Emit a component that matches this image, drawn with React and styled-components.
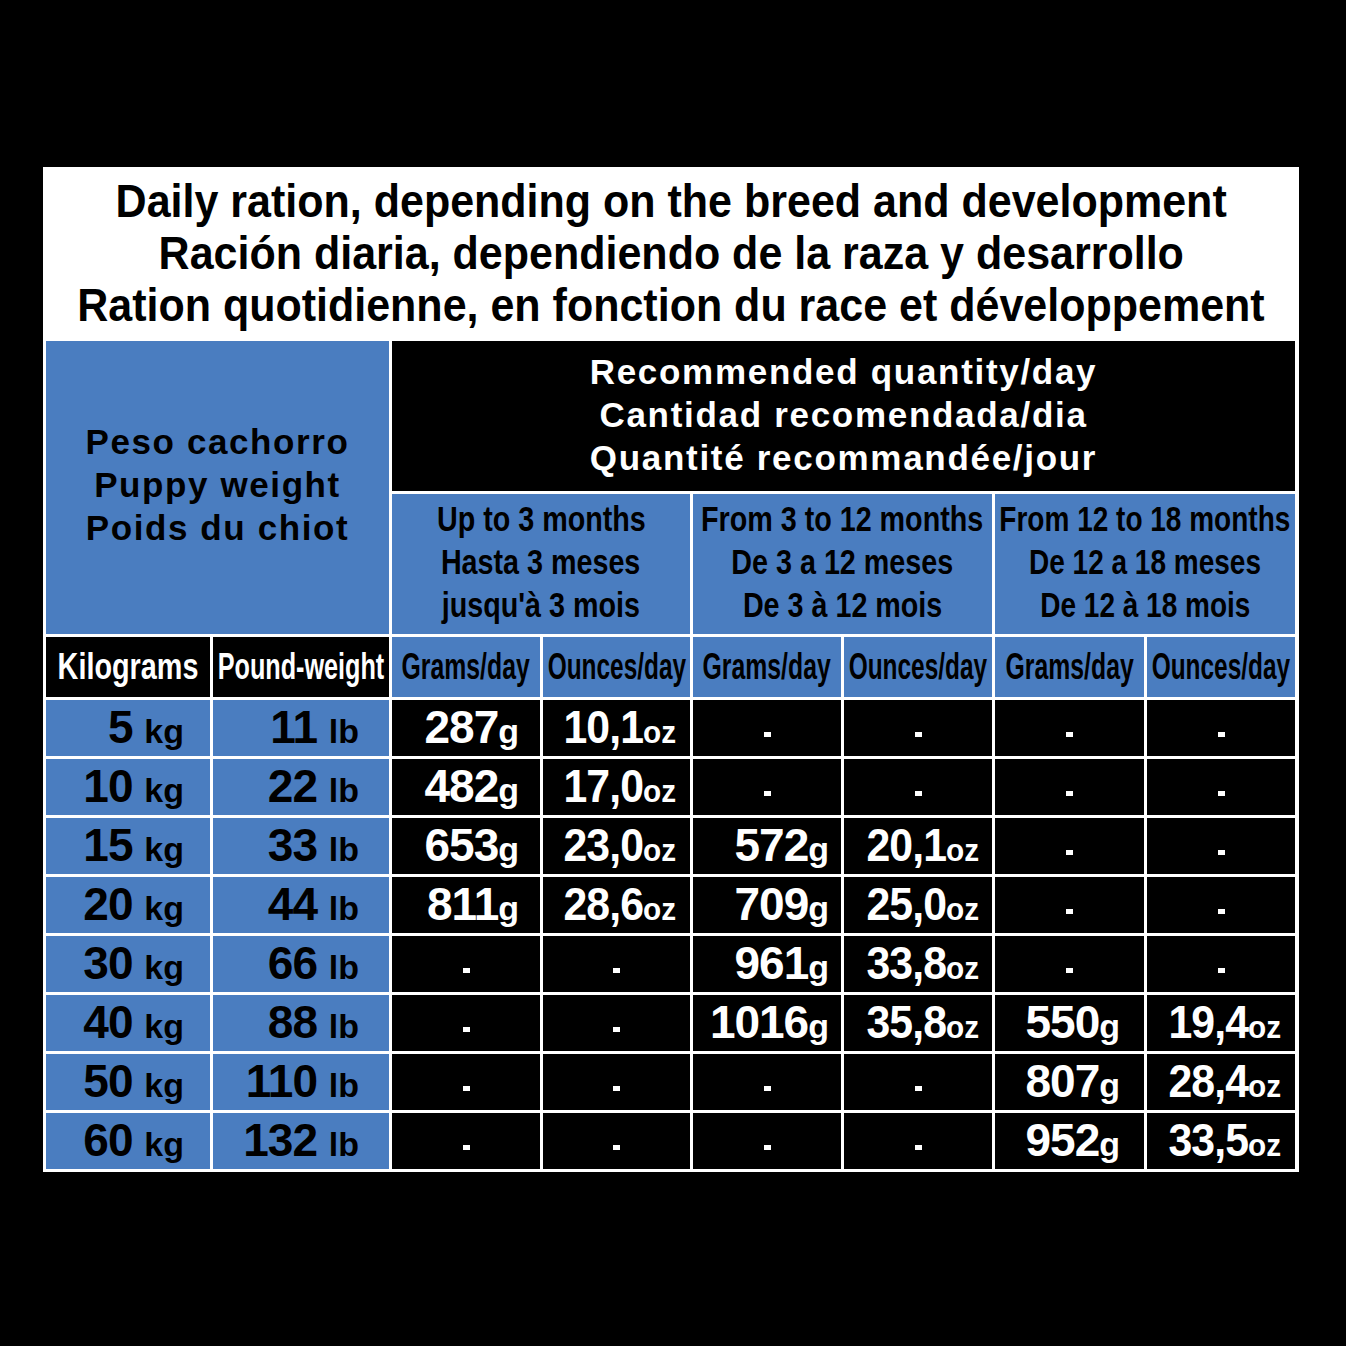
import React from 'react';
import styled, { createGlobalStyle } from 'styled-components';

const GlobalStyle = createGlobalStyle`
  html, body {
    margin: 0;
    padding: 0;
    background: #000;
  }
  body {
    font-family: "Liberation Sans", Arial, sans-serif;
  }
`;

const BLUE = '#4a7dc0';

const Page = styled.div`
  width: 1346px;
  height: 1346px;
  box-sizing: border-box;
  padding: 167px 0 0 43px;
  background: #000;
`;

const Sheet = styled.div`
  width: 1256px;
  box-sizing: border-box;
  background: #fff;
  padding: 0 3px 3px 3px;
`;

const Title = styled.div`
  height: 174px;
  display: flex;
  flex-direction: column;
  justify-content: center;
  align-items: center;
  font-size: 47px;
  font-weight: 700;
  line-height: 52px;
  color: #000;
  padding-bottom: 2px;
  box-sizing: border-box;
`;

const Squeeze = styled.span`
  display: inline-block;
  white-space: nowrap;
  transform: scaleX(${p => p.$s || 1});
  transform-origin: ${p => p.$origin || 'center'};
`;

const Grid = styled.div`
  display: grid;
  grid-template-columns: 164px 176px 148px 147px 148px 148px 149px 148px;
  grid-template-rows: 150px 140px 60px repeat(8, 56px);
  gap: 3px;
`;

const Cell = styled.div`
  display: flex;
  flex-direction: column;
  justify-content: center;
  align-items: ${p => (p.$right ? 'flex-end' : 'center')};
  background: ${p => (p.$blue ? BLUE : '#000')};
  color: ${p => (p.$blue ? '#000' : '#fff')};
  font-weight: 700;
  overflow: hidden;
  white-space: nowrap;
  grid-column: ${p => p.$col || 'auto'};
  grid-row: ${p => p.$row || 'auto'};
  padding-right: ${p => (p.$pad ? `${p.$pad}px` : '0')};
  padding-bottom: ${p => (p.$lift ? `${p.$lift}px` : '0')};
  box-sizing: border-box;
`;

const BlockText = styled.div`
  font-size: ${p => p.$size}px;
  line-height: 43px;
  letter-spacing: ${p => p.$ls || 0}px;
  text-align: center;
`;

const UnitLabel = styled.div`
  font-size: ${p => p.$size || 36}px;
  line-height: 60px;
`;

const Value = styled.div`
  font-size: 46px;
  line-height: 56px;
  letter-spacing: -1px;
  padding-top: 2px;
`;

const Small = styled.span`
  font-size: ${p => p.$size || 34}px;
  letter-spacing: 0;
`;

const Dash = styled.span`
  display: block;
  width: 7px;
  height: 5px;
  background: #fff;
  margin-top: 12px;
`;

const months = [
  { s: 0.82, lines: ['Up to 3 months', 'Hasta 3 meses', "jusqu'à 3 mois"] },
  { s: 0.82, lines: ['From 3 to 12 months', 'De 3 a 12 meses', 'De 3 à 12 mois'] },
  { s: 0.8, lines: ['From 12 to 18 months', 'De 12 a 18 meses', 'De 12 à 18 mois'] },
];

const rows = [
  ['5', '11', ['287', '10,1'], null, null],
  ['10', '22', ['482', '17,0'], null, null],
  ['15', '33', ['653', '23,0'], ['572', '20,1'], null],
  ['20', '44', ['811', '28,6'], ['709', '25,0'], null],
  ['30', '66', null, ['961', '33,8'], null],
  ['40', '88', null, ['1016', '35,8'], ['550', '19,4']],
  ['50', '110', null, null, ['807', '28,4']],
  ['60', '132', null, null, ['952', '33,5']],
];

const valuePads = [21, 14, 12, 13, 24, 14];

const App = () => {
  return (
    <>
      <GlobalStyle />
      <Page>
        <Sheet>
          <Title>
            <Squeeze $s={0.915}>Daily ration, depending on the breed and development</Squeeze>
            <Squeeze $s={0.915}>Ración diaria, dependiendo de la raza y desarrollo</Squeeze>
            <Squeeze $s={0.915}>Ration quotidienne, en fonction du race et développement</Squeeze>
          </Title>
          <Grid>
            <Cell $blue $col="1 / span 2" $row="1 / span 2" $lift={6}>
              <BlockText $size={35} $ls={1.6}>
                Peso cachorro
                <br />
                Puppy weight
                <br />
                Poids du chiot
              </BlockText>
            </Cell>
            <Cell $col="3 / span 6" $row="1" $lift={4}>
              <BlockText $size={35} $ls={1.7}>
                Recommended quantity/day
                <br />
                Cantidad recomendada/dia
                <br />
                Quantité recommandée/jour
              </BlockText>
            </Cell>
            {months.map((m, i) => (
              <Cell key={m.lines[0]} $blue $col={`${3 + i * 2} / span 2`} $row="2" $lift={6}>
                {m.lines.map(line => (
                  <BlockText key={line} $size={35}>
                    <Squeeze $s={m.s}>{line}</Squeeze>
                  </BlockText>
                ))}
              </Cell>
            ))}

            <Cell>
              <UnitLabel>
                <Squeeze $s={0.8}>Kilograms</Squeeze>
              </UnitLabel>
            </Cell>
            <Cell>
              <UnitLabel>
                <Squeeze $s={0.7}>Pound-weight</Squeeze>
              </UnitLabel>
            </Cell>
            {[0, 1, 2].map(i => (
              <React.Fragment key={i}>
                <Cell $blue>
                  <UnitLabel $size={37}>
                    <Squeeze $s={0.67}>Grams/day</Squeeze>
                  </UnitLabel>
                </Cell>
                <Cell $blue>
                  <UnitLabel $size={37}>
                    <Squeeze $s={0.66}>Ounces/day</Squeeze>
                  </UnitLabel>
                </Cell>
              </React.Fragment>
            ))}

            {rows.map(([kg, lb, ...groups]) => (
              <React.Fragment key={kg}>
                <Cell $blue $right $pad={26}>
                  <Value>
                    {kg} <Small>kg</Small>
                  </Value>
                </Cell>
                <Cell $blue $right $pad={30}>
                  <Value>
                    {lb} <Small>lb</Small>
                  </Value>
                </Cell>
                {groups.map((g, gi) =>
                  g ? (
                    <React.Fragment key={gi}>
                      <Cell $right $pad={valuePads[gi * 2]}>
                        <Value>
                          {g[0]}
                          <Small>g</Small>
                        </Value>
                      </Cell>
                      <Cell $right $pad={valuePads[gi * 2 + 1]}>
                        <Value>
                          <Squeeze $s={0.93} $origin="right">
                            {g[1]}
                            <Small $size={32}>oz</Small>
                          </Squeeze>
                        </Value>
                      </Cell>
                    </React.Fragment>
                  ) : (
                    <React.Fragment key={gi}>
                      <Cell>
                        <Dash />
                      </Cell>
                      <Cell>
                        <Dash />
                      </Cell>
                    </React.Fragment>
                  )
                )}
              </React.Fragment>
            ))}
          </Grid>
        </Sheet>
      </Page>
    </>
  );
};

export default App;
